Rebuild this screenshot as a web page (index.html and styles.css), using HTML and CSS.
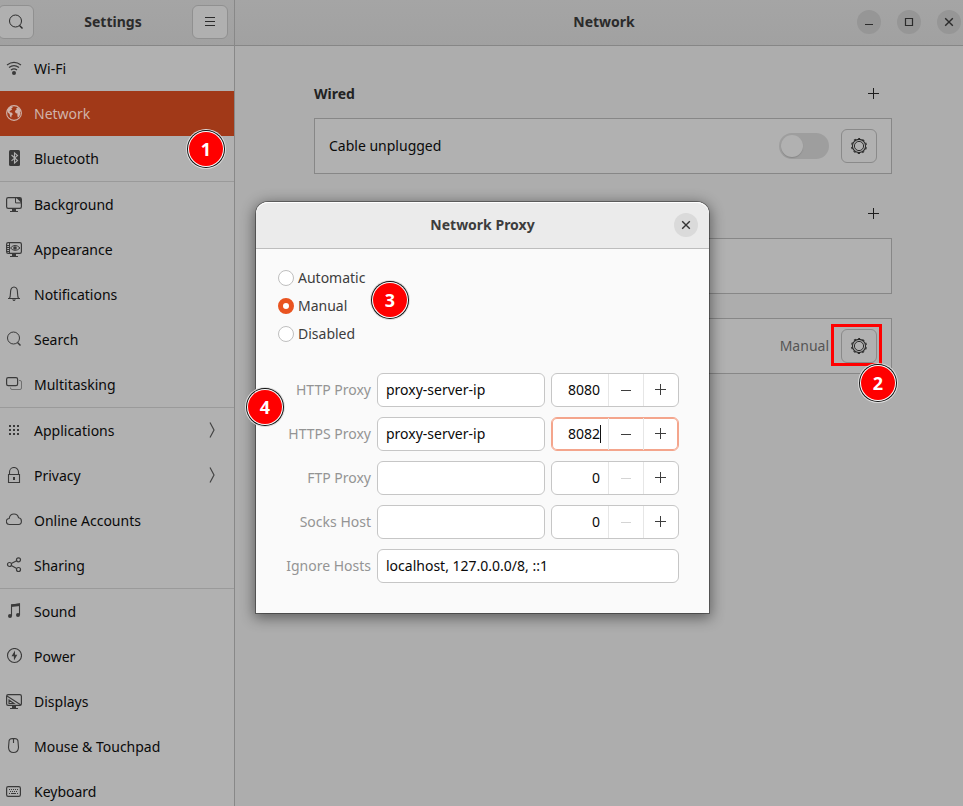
FILE: index.html
```html
<!DOCTYPE html>
<html lang="en">
<head>
<meta charset="utf-8">
<meta name="viewport" content="width=device-width, initial-scale=1">
<title>Settings</title>
<link rel="stylesheet" href="styles.css">
</head>
<body>
<svg class="defs" aria-hidden="true">
  <symbol id="gear" viewBox="0 0 18 18"><circle cx="9" cy="9" r="6.6" fill="none" stroke="currentColor" stroke-width="1.1"/><circle cx="9" cy="9" r="4.6" fill="none" stroke="currentColor"/><circle cx="9" cy="9" r="7.4" fill="none" stroke="currentColor" stroke-width="1.2" stroke-dasharray="2.2 2.45" stroke-dashoffset="1.1" transform="rotate(-90 9 9)"/></symbol>
  <symbol id="plus" viewBox="0 0 12 12"><path d="M5.5 0v11M0 5.5h11" fill="none" stroke="currentColor"/></symbol>
  <symbol id="minus" viewBox="0 0 12 12"><path d="M1 6.5h10" fill="none" stroke="currentColor"/></symbol>
  <symbol id="cross" viewBox="0 0 12 12"><path d="M2.2 2.2l7.6 7.6M9.8 2.2l-7.6 7.6" fill="none" stroke="currentColor" stroke-width="1.4"/></symbol>
  <symbol id="search" viewBox="0 0 16 16"><circle cx="7.5" cy="7" r="6" fill="none" stroke="currentColor"/><path d="M11.5 11.5l3 3" fill="none" stroke="currentColor" stroke-width="1.4"/></symbol>
  <symbol id="chevron" viewBox="0 0 8 16"><path d="M2 .5l4 7.5-4 7.5" fill="none" stroke="currentColor" stroke-width="1.2"/></symbol>
</svg>
<div class="window">
  <aside class="sidebar">
    <header class="bar bar-side">
      <button class="tool tool-search" aria-label="Search"><svg class="icon"><use href="#search"/></svg></button>
      <h1 class="title">Settings</h1>
      <button class="tool" aria-label="Menu"><svg class="icon" viewBox="0 0 16 16"><path d="M3 3.5h10M3 7.5h10M3 11.5h10" fill="none" stroke="currentColor"/></svg></button>
    </header>
    <nav>
      <ul class="group">
        <li><a class="item" href="#"><svg class="icon" viewBox="0 0 16 16"><g fill="none" stroke="currentColor" stroke-width="1.2"><path d="M1 4.9Q8-.3 15 4.9"/><path d="M3 7.5Q8 3.6 13 7.5"/><path d="M5 10Q8 7.7 11 10"/></g><circle cx="8" cy="13" r="2" fill="currentColor"/></svg>Wi-Fi</a></li>
        <li><a class="item item-active" href="#" aria-current="page"><svg class="icon" viewBox="0 0 16 16"><circle cx="8" cy="8" r="7.4" fill="none" stroke="currentColor" stroke-width="1.1"/><path d="M1.200 5L3 2.600 6 1.200l.8 1.200-1.600 1.200 1 .8-1.400 1-1.200.6.400 1.200 2 .6.800 1.400-1.200 1.200-.4 2.400-1.200-1.600-.4-2.200L1.800 7.500zM9.800 4L11.500 2.600l2 1.200 1.300 2.600-1 .4.600 2-1.400 3.200-1.200.6-.5-2.400.2-1.700-1.700-.3-.9-1.700.9-1.400 1.300-.3z" fill="currentColor"/></svg>Network</a><span class="badge badge-one">1</span></li>
        <li><a class="item" href="#"><svg class="icon" viewBox="0 0 16 16"><rect x="3" width="11" height="16" rx="1.5" fill="currentColor"/><path d="M5.5 5l6 5.5-3 2.6V2.9l3 2.6-6 5.3" fill="none" stroke="#b1b1b1" stroke-width="1.1"/></svg>Bluetooth</a></li>
      </ul>
      <ul class="group">
        <li><a class="item" href="#"><svg class="icon" viewBox="0 0 16 16"><rect x=".6" y="1.6" width="14.8" height="10.8" rx="1.6" fill="none" stroke="currentColor" stroke-width="1.2"/><path d="M9.5 1.700v5.200h5.800" fill="none" stroke="currentColor"/><path d="M10.500 2h4.500v4.500zM6 13h4v2H6zM4 15h8v1H4z" fill="currentColor"/></svg>Background</a></li>
        <li><a class="item" href="#"><svg class="icon" viewBox="0 0 16 16"><rect x=".6" y="1.6" width="14.8" height="10.8" rx="1.6" fill="none" stroke="currentColor" stroke-width="1.2"/><path d="M3.500 2v10M1 4.500h2M1 6.500h2M1 8.500h2M1 10.500h2" stroke="currentColor"/><path d="M4.500 7Q9 1.800 14 7 9 11.800 4.500 7z" fill="none" stroke="currentColor"/><circle cx="9" cy="7" r="1.800" fill="currentColor"/><path d="M6 13h4v2H6zM4 15h8v1H4z" fill="currentColor"/></svg>Appearance</a></li>
        <li><a class="item" href="#"><svg class="icon" viewBox="0 0 16 16"><path d="M2 12.500h12M3.500 12.200C5 10 4 6 5 3.200 5.600 1.400 6.500 1 8 1s2.400.4 3 2.200C12 6 11 10 12.500 12.200" fill="none" stroke="currentColor" stroke-width="1.100"/><path d="M6 13.500h4L8.500 15h-1z" fill="currentColor"/></svg>Notifications</a></li>
        <li><a class="item" href="#"><svg class="icon"><use href="#search"/></svg>Search</a></li>
        <li><a class="item" href="#"><svg class="icon" viewBox="0 0 16 16"><rect x=".6" y="1.600" width="11" height="8" rx="1.600" fill="none" stroke="currentColor" stroke-width="1.200"/><path d="M13 4.500h1q1.500 0 1.500 1.500v6q0 1.500-1.500 1.500H6q-1.500 0-1.500-1.500v-.5" fill="none" stroke="currentColor" opacity=".55"/></svg>Multitasking</a></li>
      </ul>
      <ul class="group">
        <li><a class="item" href="#"><svg class="icon" viewBox="0 0 16 16"><path d="M3 3h2v2H3zM7 3h2v2H7zM11 3h2v2h-2zM3 7h2v2H3zM7 7h2v2H7zM11 7h2v2h-2zM3 11h2v2H3zM7 11h2v2H7zM11 11h2v2h-2z" fill="currentColor"/></svg>Applications<svg class="chevron"><use href="#chevron"/></svg></a></li>
        <li><a class="item" href="#"><svg class="icon" viewBox="0 0 16 16"><path d="M2.500 7.500h11v8h-11zM3.500 7V5a4.500 4.500 0 0 1 9 0v2" fill="none" stroke="currentColor" stroke-width="1.100"/><path d="M7 10h2v3H7z" fill="currentColor"/></svg>Privacy<svg class="chevron"><use href="#chevron"/></svg></a></li>
        <li><a class="item" href="#"><svg class="icon" viewBox="0 0 16 16"><path d="M3.500 12.500a3 3 0 0 1-.3-6C3.600 3.500 5.500 2 8 2s4 1.500 4.600 3.800c3.800.4 3.700 6.700 0 6.700z" fill="none" stroke="currentColor" stroke-width="1.100"/></svg>Online Accounts</a></li>
        <li><a class="item" href="#"><svg class="icon" viewBox="0 0 16 16"><g fill="none" stroke="currentColor" stroke-width="1.200"><circle cx="3.500" cy="7.500" r="2"/><circle cx="12.500" cy="2.800" r="2"/><circle cx="12.500" cy="12.500" r="2"/><path d="M5.300 6.500l5.400-2.700M5.300 8.500l5.400 3"/></g></svg>Sharing</a></li>
      </ul>
      <ul class="group">
        <li><a class="item" href="#"><svg class="icon" viewBox="0 0 16 16"><path d="M5.500 13V2l8-1v11" fill="none" stroke="currentColor" stroke-width="1.100"/><path d="M5 1.500L14 .3v2.800l-9 1z" fill="currentColor"/><circle cx="4" cy="13" r="2" fill="currentColor"/><circle cx="12" cy="12" r="2" fill="currentColor"/></svg>Sound</a></li>
        <li><a class="item" href="#"><svg class="icon" viewBox="0 0 16 16"><circle cx="8.500" cy="7.500" r="7" fill="none" stroke="currentColor" stroke-width="1.100"/><path d="M9 2.500L5.500 8.200h2.300L8 12.500l3.300-5.800H9z" fill="currentColor"/></svg>Power</a></li>
        <li><a class="item" href="#"><svg class="icon" viewBox="0 0 16 16"><rect x=".6" y="1.6" width="14.8" height="10.8" rx="1.6" fill="none" stroke="currentColor" stroke-width="1.2"/><path d="M1 3l14 9M3 7v3.500h5zM3 7l5 3.500" fill="none" stroke="currentColor" stroke-width="1.100"/><path d="M6 13h4v2H6zM4 15h8v1H4z" fill="currentColor"/></svg>Displays</a></li>
        <li><a class="item" href="#"><svg class="icon" viewBox="0 0 16 16"><path d="M3 3.500Q3 .5 7.500.5T12 3.500l.5 6q-.4 5-5 5t-5-5zM7.500.5V5" fill="none" stroke="currentColor" stroke-width="1.100"/></svg>Mouse &amp; Touchpad</a></li>
        <li><a class="item" href="#"><svg class="icon" viewBox="0 0 16 16"><rect x=".6" y="3.600" width="13.800" height="9.800" rx="1.600" fill="none" stroke="currentColor" stroke-width="1.200"/><path d="M3 6.500h10M4 8.500h8" stroke="currentColor" stroke-dasharray="1 1"/><path d="M3 10.500h1M5 10.500h5M11 10.500h1" stroke="currentColor"/></svg>Keyboard</a></li>
      </ul>
    </nav>
  </aside>
  <main class="main">
    <header class="bar bar-main">
      <h2 class="title">Network</h2>
      <div class="controls">
        <button class="round" aria-label="Minimize"><svg class="glyph" viewBox="0 0 12 12"><path d="M2 8.500h8" stroke="currentColor"/></svg></button>
        <button class="round" aria-label="Maximize"><svg class="glyph" viewBox="0 0 12 12"><path d="M2.500 2.500h7v7h-7z" fill="none" stroke="currentColor" stroke-width="1.200"/></svg></button>
        <button class="round" aria-label="Close"><svg class="glyph"><use href="#cross"/></svg></button>
      </div>
    </header>
    <div class="content">
      <section class="section">
        <div class="heading"><h3 class="title title-section">Wired</h3><button class="add" aria-label="Add wired connection"><svg class="glyph"><use href="#plus"/></svg></button></div>
        <div class="card"><label class="card-label" for="wired">Cable unplugged</label><input class="switch" id="wired" type="checkbox" role="switch"><button class="tool" aria-label="Wired options"><svg class="gear"><use href="#gear"/></svg></button></div>
      </section>
      <section class="section">
        <div class="heading heading-end"><button class="add" aria-label="Add VPN"><svg class="glyph"><use href="#plus"/></svg></button></div>
        <div class="card"></div>
      </section>
      <section class="section section-proxy">
        <div class="card card-end"><span class="status">Manual</span><div class="marked"><button class="tool" aria-label="Proxy options"><svg class="gear"><use href="#gear"/></svg></button><span class="frame"></span><span class="badge badge-two">2</span></div></div>
      </section>
    </div>
  </main>
</div>
<div class="overlay">
  <form class="dialog" role="dialog" aria-labelledby="dialog-title">
    <header class="dialog-bar"><h2 class="title" id="dialog-title">Network Proxy</h2><button class="round round-light" type="button" aria-label="Close"><svg class="glyph"><use href="#cross"/></svg></button></header>
    <div class="dialog-body">
      <div class="modes">
        <label class="mode"><input class="radio" type="radio" name="mode">Automatic</label>
        <label class="mode"><input class="radio" type="radio" name="mode" checked>Manual</label>
        <label class="mode"><input class="radio" type="radio" name="mode">Disabled</label>
        <span class="badge badge-three">3</span>
      </div>
      <div class="fields">
        <label class="field-label" for="http">HTTP Proxy</label>
        <input class="entry" id="http" type="text" value="proxy-server-ip">
        <div class="spin"><input class="port" type="text" inputmode="numeric" aria-label="HTTP port" value="8080"><button class="step" type="button" aria-label="Decrease"><svg class="glyph"><use href="#minus"/></svg></button><button class="step" type="button" aria-label="Increase"><svg class="glyph"><use href="#plus"/></svg></button></div>
        <label class="field-label" for="https">HTTPS Proxy</label>
        <input class="entry" id="https" type="text" value="proxy-server-ip">
        <div class="spin spin-focus"><input class="port" type="text" inputmode="numeric" aria-label="HTTPS port" value="8082"><span class="caret"></span><button class="step" type="button" aria-label="Decrease"><svg class="glyph"><use href="#minus"/></svg></button><button class="step" type="button" aria-label="Increase"><svg class="glyph"><use href="#plus"/></svg></button></div>
        <label class="field-label" for="ftp">FTP Proxy</label>
        <input class="entry" id="ftp" type="text">
        <div class="spin"><input class="port" type="text" inputmode="numeric" aria-label="FTP port" value="0"><button class="step" type="button" aria-label="Decrease" disabled><svg class="glyph"><use href="#minus"/></svg></button><button class="step" type="button" aria-label="Increase"><svg class="glyph"><use href="#plus"/></svg></button></div>
        <label class="field-label" for="socks">Socks Host</label>
        <input class="entry" id="socks" type="text">
        <div class="spin"><input class="port" type="text" inputmode="numeric" aria-label="Socks port" value="0"><button class="step" type="button" aria-label="Decrease" disabled><svg class="glyph"><use href="#minus"/></svg></button><button class="step" type="button" aria-label="Increase"><svg class="glyph"><use href="#plus"/></svg></button></div>
        <label class="field-label" for="ignore">Ignore Hosts</label>
        <input class="entry entry-wide" id="ignore" type="text" value="localhost, 127.0.0.0/8, ::1">
      </div>
    </div>
    <span class="badge badge-four">4</span>
  </form>
</div>
</body>
</html>
```
FILE: styles.css
```css
* { box-sizing: border-box; }
body { margin: 0; color: #0a0a0a; overflow: hidden; }
body, button, input { font-family: "Noto Sans", "Open Sans", sans-serif; font-size: 14px; line-height: 20px; }
button { margin: 0; padding: 0; border: 0; background: none; color: inherit; display: flex; align-items: center; justify-content: center; flex: none; }
ul { list-style: none; margin: 0; padding: 0; }
svg { display: block; flex: none; }
.defs { position: absolute; width: 0; height: 0; }
.window { display: flex; height: 100vh; overflow: hidden; background: #adadad; }
.sidebar { width: 235px; flex: none; background: #b1b1b1; border-right: 1px solid #888; }
.bar { height: 46px; border-bottom: 1px solid #868686; background: linear-gradient(#a5a5a5, #a1a1a1); color: #2b2b2b; }
.bar-side { display: flex; align-items: center; justify-content: space-between; padding: 0 6px 1px 0; }
.title { margin: 0; font-size: 14px; line-height: 20px; font-weight: 700; }
.title-section { color: #222; }
.tool { width: 36px; height: 34px; border: 1px solid #909090; border-radius: 6px; background: #b0b0b0; color: #2b2b2b; }
.tool-search { margin-left: -2px; }
.icon { width: 16px; height: 16px; }
.glyph { width: 12px; height: 12px; }
.gear { width: 18px; height: 18px; }
.chevron { width: 8px; height: 16px; margin: 0 0 1px auto; color: #444; }
.group + .group { border-top: 1px solid #9a9a9a; }
.group li { position: relative; }
.item { display: flex; align-items: center; gap: 12px; height: 45px; padding: 0 18px 0 6px; color: #0a0a0a; text-decoration: none; }
.item .icon { margin-bottom: 1px; color: #3a3a3a; }
.item-active, .item-active .icon { color: #d0b3aa; }
.item-active { background: #a13918; }
.main { flex: 1; min-width: 0; }
.bar-main { display: grid; grid-template-columns: 1fr auto 1fr; align-items: center; padding: 0 2px 1px 12px; }
.bar-main .title { grid-column: 2; }
.controls { grid-column: 3; display: flex; justify-content: flex-end; gap: 16px; }
.round { width: 24px; height: 24px; border-radius: 50%; background: #969696; }
.round-light { background: #dadada; color: #333; }
.content { padding: 24px 71px 0 79px; }
.section { margin-bottom: 16px; }
.section-proxy { margin-top: 24px; }
.heading { display: flex; align-items: center; justify-content: space-between; height: 48px; }
.heading-end { justify-content: flex-end; }
.add { width: 36px; height: 36px; color: #1c1c1c; }
.card { display: flex; align-items: center; gap: 12px; height: 56px; padding: 0 14px; border: 1px solid #878787; background: #b1b1b1; }
.card-end { justify-content: flex-end; }
.card-label { flex: 1; }
.status { color: #555; }
.card .tool { background: #b1b1b1; border-color: #8a8a8a; }
.switch { appearance: none; margin: 0; width: 50px; height: 26px; border-radius: 13px; background: #9e9e9e; padding: 2px; display: flex; }
.switch::before { content: ""; width: 22px; height: 22px; border-radius: 50%; background: #b1b1b1; box-shadow: 0 1px 1px #888; }
.marked { position: relative; }
.frame { position: absolute; inset: -5px -5px -3px -10px; border: 3px solid #f00; }
.overlay { position: absolute; inset: 0; display: flex; align-items: center; justify-content: center; padding: 9px 0 0 2px; }
.dialog { position: relative; width: 453px; border-radius: 12px 12px 0 0; background: #fafafa; color: #3d3d3d; box-shadow: 0 0 0 1px rgba(0,0,0,.35), 0 3px 14px 2px rgba(0,0,0,.45); }
.dialog-bar { display: grid; grid-template-columns: 1fr auto 1fr; align-items: center; height: 47px; padding: 0 11px; border-bottom: 1px solid #bdbdbd; border-radius: 12px 12px 0 0; background: #ebebeb; box-shadow: inset 0 1px #fff; }
.dialog-bar .title { grid-column: 2; }
.dialog-bar .round { justify-self: end; }
.dialog-body { padding: 15px 30px 30px 22px; }
.modes { position: relative; margin-bottom: 25px; }
.mode { display: flex; align-items: center; gap: 4px; height: 28px; }
.radio { appearance: none; margin: 0; width: 16px; height: 16px; border: 1px solid #bfbfbf; border-radius: 50%; background: #fff; }
.radio:checked { border: 5px solid #e95420; }
.fields { display: grid; grid-template-columns: 1fr 168px 128px; gap: 10px 6px; align-items: center; }
.field-label { text-align: right; color: #949494; white-space: nowrap; }
.entry, .spin { width: 100%; height: 34px; border: 1px solid #c6c6c6; border-radius: 6px; background: #fff; }
.entry { padding: 0 8px 2px; color: #0a0a0a; }
.entry-wide { grid-column: 2 / 4; }
.spin { display: flex; overflow: hidden; position: relative; }
.spin-focus { border-color: #f4a58c; box-shadow: inset 0 0 0 1px #f4a58c; }
.port { flex: 1; min-width: 0; border: 0; padding: 0 8px 0 0; background: none; text-align: right; color: #0a0a0a; }
input, button { outline: 0; }
.caret { position: absolute; right: 77px; top: 7px; width: 1px; height: 18px; background: #111; }
.step { width: 35px; border-left: 1px solid #e6e6e6; color: #3d3d3d; }
.step:disabled { color: #d4d4d4; }
.badge { position: absolute; z-index: 2; display: flex; align-items: center; justify-content: center; width: 34px; height: 34px; border-radius: 50%; background: #f00; color: #fff; font-size: 18px; line-height: 24px; font-weight: 700; box-shadow: 0 0 0 1px #fff, 0 0 0 2px #111, 0 0 0 3px #ddd; }
.badge-one { right: 11px; top: 41px; }
.badge-two { left: 20px; top: 37px; }
.badge-three { left: 95px; top: 19px; }
.badge-four { left: -8px; top: 188px; }
```
